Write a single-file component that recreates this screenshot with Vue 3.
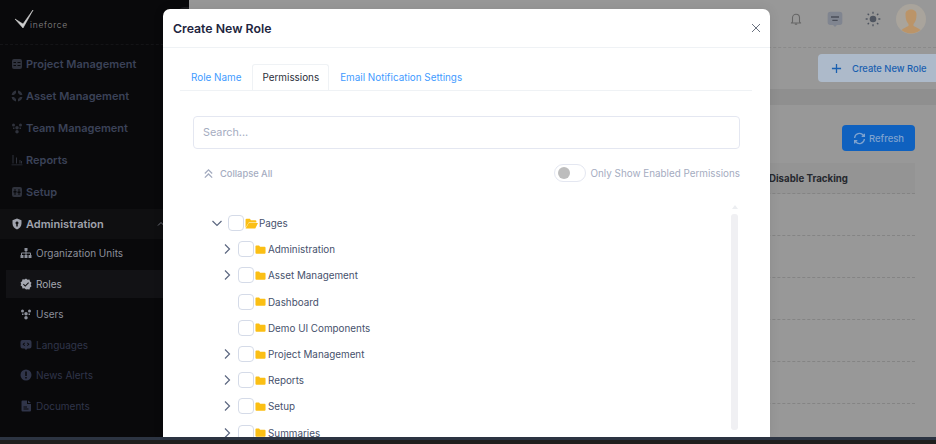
<template>
  <div class="screen">
    <div class="desktop">
      <aside class="sidebar">
        <div class="logo">
          <svg class="logo-mark" width="22" height="22" viewBox="0 0 22 22" fill="none">
            <path d="M1 10 L9 19 L19 1 L9 15 Z" fill="#cfcfcf" stroke="#cfcfcf" stroke-width="0.6" stroke-linejoin="round" />
          </svg>
          <span class="logo-text">ineforce</span>
          <span class="toggle-btn"></span>
        </div>
        <nav class="menu">
          <a v-for="item in mainMenu" :key="item.label" class="menu-item">
            <svg class="menu-icon" viewBox="0 0 24 24" fill="currentColor" fill-rule="evenodd"><path :d="icons[item.icon]" /></svg>
            {{ item.label }}
          </a>
          <a class="menu-item open">
            <svg class="menu-icon" viewBox="0 0 24 24" fill="currentColor" fill-rule="evenodd"><path :d="icons.shield" /></svg>
            Administration
            <svg class="menu-caret" width="8" height="8" viewBox="0 0 8 8" fill="none" stroke="#6a6d76" stroke-width="1"><path d="M1 5.500L4 2.500 7 5.500" /></svg>
          </a>
          <div class="submenu">
            <a v-for="item in subMenu" :key="item.label" class="sub-item" :class="{ active: item.active, dim: item.dim }">
              <svg class="sub-icon" viewBox="0 0 24 24" fill="currentColor" fill-rule="evenodd"><path :d="icons[item.icon]" /></svg>
              {{ item.label }}
            </a>
          </div>
        </nav>
      </aside>

      <main class="page">
        <header class="topbar">
          <svg class="top-icon bell" width="14" height="14" viewBox="0 0 24 24" fill="none" stroke="#666" stroke-width="1.800"><path d="M6 17V10a6 6 0 0 1 12 0v7l2 2H4zM10 21h4" stroke-linejoin="round" /></svg>
          <svg class="top-icon chat" width="16" height="16" viewBox="0 0 24 24"><path d="M5 1h14a4 4 0 0 1 4 4v12a4 4 0 0 1-4 4h-4l-3 3-3-3H5a4 4 0 0 1-4-4V5a4 4 0 0 1 4-4z" fill="#808590" /><path d="M6 8h12v2H6zM8 13h8v2H8z" fill="#4a4e58" /></svg>
          <svg class="top-icon sun" width="16" height="16" viewBox="0 0 24 24" fill="#4f5560" stroke="#4f5560" stroke-width="2"><circle cx="12" cy="12" r="5" stroke="none" /><path d="M12 1v3M12 20v3M1 12h3M20 12h3M4 4l2 2M18 18l2 2M20 4l-2 2M6 18l-2 2" /></svg>
          <span class="avatar">
            <svg width="30" height="30" viewBox="0 0 30 30">
              <circle cx="15" cy="15" r="15" fill="#a9a49c" />
              <path d="M9.500 10c0-6 11-6 11 0 0 5-1 8-3 10v2c2 1 5 2 7 4a15 15 0 0 1-19 0c2-2 5-3 7-4v-2c-2-2-3-5-3-10z" fill="#bb9468" />
            </svg>
          </span>
        </header>
        <div class="toolbar">
          <button class="create-btn">
            <svg width="11" height="11" viewBox="0 0 12 12" stroke="#1a60b0" stroke-width="1.400"><path d="M6 1v10M1 6h10" /></svg>
            Create New Role
          </button>
        </div>
        <div class="band"></div>
        <section class="card">
          <div class="card-head">
            <button class="refresh-btn">
              <svg width="13" height="13" viewBox="0 0 24 24" fill="none" stroke="#7fa3cf" stroke-width="2.400"><path d="M3 11a9 9 0 0 1 16-5l2 2M21 13a9 9 0 0 1-16 5l-2-2M21 3v5h-5M3 21v-5h5" /></svg>
              Refresh
            </button>
          </div>
          <div class="table-head">Disable Tracking</div>
          <div v-for="n in 5" :key="n" class="table-row"></div>
        </section>
      </main>

      <div class="modal">
        <div class="modal-header">
          <h2>Create New Role</h2>
          <svg width="10" height="10" viewBox="0 0 10 10" stroke="#6b7280" stroke-width="1"><path d="M1 1l8 8M9 1L1 9" /></svg>
        </div>
        <div class="modal-body">
          <div class="tabs">
            <span class="tab">Role Name</span>
            <span class="tab current">Permissions</span>
            <span class="tab">Email Notification Settings</span>
          </div>
          <div class="panel">
            <div class="search">Search...</div>
            <div class="filters">
              <span class="collapse">
                <svg width="11" height="11" viewBox="0 0 12 12" fill="none" stroke="#a3abbf" stroke-width="1.400"><path d="M2 6l4-4 4 4M2 10.500l4-4 4 4" /></svg>
                Collapse All
              </span>
              <span class="only-enabled">
                <span class="switch"><i></i></span>
                Only Show Enabled Permissions
              </span>
            </div>
            <div class="tree">
              <div class="node root">
                <svg class="chevron" width="12" height="12" viewBox="0 0 12 12" fill="none" stroke="#5c6780" stroke-width="1.200"><path d="M1.500 4l4.500 4.500L10.500 4" /></svg>
                <span class="check"></span>
                <svg class="folder" width="13" height="13" viewBox="0 0 24 24" fill="#fbbf14"><path d="M1 5a2 2 0 0 1 2-2h6l2 3h8a2 2 0 0 1 2 2v2H7l-6 10zM7 11h17l-5 10H1z" /></svg>
                <span class="label">Pages</span>
              </div>
              <div v-for="page in pages" :key="page.name" class="node child">
                <svg class="chevron" :class="{ hidden: !page.more }" width="12" height="12" viewBox="0 0 12 12" fill="none" stroke="#5c6780" stroke-width="1.200"><path d="M4 1.500L8.500 6 4 10.500" /></svg>
                <span class="check"></span>
                <svg class="folder" width="11" height="11" viewBox="0 0 24 24" fill="#fbbf14"><path d="M1 5a2 2 0 0 1 2-2h6l2 3h10a2 2 0 0 1 2 2v11a2 2 0 0 1-2 2H3a2 2 0 0 1-2-2z" /></svg>
                <span class="label">{{ page.name }}</span>
              </div>
              <div class="scrollbar">
                <span class="arrow"></span>
                <span class="thumb"></span>
              </div>
            </div>
          </div>
        </div>
      </div>
    </div>
    <div class="taskbar"></div>
  </div>
</template>

<script setup>
const icons = {
  table: 'M6 2h12a4 4 0 0 1 4 4v12a4 4 0 0 1-4 4H6a4 4 0 0 1-4-4V6a4 4 0 0 1 4-4zM5 8v2h5V8zM13 8v2h6V8zM5 14v2h5v-2zM13 14v2h6v-2z',
  asset: 'M14 1.200A11 11 0 0 1 22.800 10H17.700A6 6 0 0 0 14 6.300zM22.800 14A11 11 0 0 1 14 22.800V17.700A6 6 0 0 0 17.700 14zM10 22.800A11 11 0 0 1 1.200 14H6.300A6 6 0 0 0 10 17.700zM1.200 10A11 11 0 0 1 10 1.200V6.300A6 6 0 0 0 6.300 10z',
  team: 'M5 3a3 3 0 1 1 0 6 3 3 0 0 1 0-6zM19 3a3 3 0 1 1 0 6 3 3 0 0 1 0-6zM12 8a3.500 3.500 0 1 1 0 7 3.500 3.500 0 0 1 0-7zM12 16a3.500 3.500 0 1 1 0 7 3.500 3.500 0 0 1 0-7zM4 11h3v3H4zM17 11h3v3h-3z',
  bars: 'M3 2h2v17H3zM10 7h2v12h-2zM17 12h2v7h-2zM20 14h2v5h-2zM1 21h22v1.500H1z',
  sliders: 'M6 2h12a4 4 0 0 1 4 4v12a4 4 0 0 1-4 4H6a4 4 0 0 1-4-4V6a4 4 0 0 1 4-4zM7 6v4H5v3h2v5h2v-5h2v-3H9V6zM15 6v5h-2v3h2v4h2v-4h2v-3h-2V6z',
  shield: 'M12 1l9 3.500V11c0 6-4 10-9 12-5-2-9-6-9-12V4.500zM12 7a3 3 0 0 0-1.500 5.600V17h3v-4.400A3 3 0 0 0 12 7z',
  sitemap: 'M9 2h6v6h-2v3h7a2 2 0 0 1 2 2v3h1v6h-6v-6h3v-3h-7v3h2v6H9v-6h2v-3H4v3h3v6H1v-6h1v-3a2 2 0 0 1 2-2h7V8H9z',
  badge: 'M12 1l3 2.500 4-.5 1 4 3 2.500-1.500 3.500 1.500 3.500-3 2.500-1 4-4-.5L12 23l-3-2.500-4 .5-1-4-3-2.500L2.500 12 1 9l3-2.500 1-4 4 .5zM16.500 8.500l-6 6-3-3-1.500 1.500 4.500 4.500 7.500-7.500z',
  chat: 'M5 2h14a4 4 0 0 1 4 4v9a4 4 0 0 1-4 4h-4l-3 3-3-3H5a4 4 0 0 1-4-4V6a4 4 0 0 1 4-4zM9 7l-4 3.500L9 14l1-1.500L7.500 10.500 10 8.500zM15 7l-1 1.500 2.500 2-2.500 2 1 1.500 4-3.500z',
  alert: 'M12 1a11 11 0 1 1 0 22 11 11 0 0 1 0-22zM10.500 5v9h3V5zM10.500 16v3h3v-3z',
  file: 'M5 1h9v7h8v13a2 2 0 0 1-2 2H5a2 2 0 0 1-2-2V3a2 2 0 0 1 2-2zM16 1l6 5h-6zM7 13v2h7v-2zM7 17v2h10v-2z'
}

const mainMenu = [
  { label: 'Project Management', icon: 'table' },
  { label: 'Asset Management', icon: 'asset' },
  { label: 'Team Management', icon: 'team' },
  { label: 'Reports', icon: 'bars' },
  { label: 'Setup', icon: 'sliders' }
]

const subMenu = [
  { label: 'Organization Units', icon: 'sitemap' },
  { label: 'Roles', icon: 'badge', active: true },
  { label: 'Users', icon: 'team' },
  { label: 'Languages', icon: 'chat', dim: true },
  { label: 'News Alerts', icon: 'alert', dim: true },
  { label: 'Documents', icon: 'file', dim: true }
]

const pages = [
  { name: 'Administration', more: true },
  { name: 'Asset Management', more: true },
  { name: 'Dashboard', more: false },
  { name: 'Demo UI Components', more: false },
  { name: 'Project Management', more: true },
  { name: 'Reports', more: true },
  { name: 'Setup', more: true },
  { name: 'Summaries', more: true }
]
</script>

<style scoped>
.screen {
  width: 936px;
  height: 444px;
  display: flex;
  flex-direction: column;
  overflow: hidden;
  font-family: Inter, "Liberation Sans", sans-serif;
  background: #989898;
}
.desktop {
  position: relative;
  height: 437px;
  flex: none;
  display: flex;
  overflow: hidden;
}
.taskbar {
  height: 7px;
  flex: none;
  box-sizing: border-box;
  background: #201f1e;
  border-top: 3px solid #2c3442;
}

.sidebar {
  width: 189px;
  flex: none;
  background: #09090b;
}
.logo {
  height: 45px;
  box-sizing: border-box;
  display: flex;
  align-items: flex-start;
  padding: 9px 0 0 14px;
  border-bottom: 1px dashed #141417;
  position: relative;
}
.logo-text {
  font-size: 8.500px;
  color: #8d8d8d;
  letter-spacing: 0.700px;
  margin: 11px 0 0 -6px;
  font-weight: 300;
}
.toggle-btn {
  position: absolute;
  right: 0;
  top: 7px;
  width: 11px;
  height: 12px;
  border-radius: 6px 0 0 6px;
  background: #1b1b1e;
}
.menu {
  padding-top: 3px;
}
.menu-item {
  height: 32px;
  display: flex;
  align-items: center;
  padding-left: 11px;
  font-size: 11px;
  font-weight: 600;
  color: #3b4258;
}
.menu-item.open {
  height: 30px;
  margin-top: 1px;
  color: #a0a3ad;
  background: #0f0f11;
}
.menu-icon {
  width: 12px;
  height: 12px;
  margin-right: 3px;
  color: #2f323c;
}
.open .menu-icon {
  color: #a0a3ad;
}
.menu-caret {
  margin-left: 53px;
}
.submenu {
  margin-top: -1px;
}
.sub-item {
  height: 30.500px;
  display: flex;
  align-items: center;
  padding-left: 20px;
  font-size: 10px;
  color: #8c909b;
}
.sub-item.active {
  color: #a6a9b2;
  background: linear-gradient(#121215, #121215) 6px 1px / 100% 28px no-repeat;
}
.sub-item.dim {
  color: #30354a;
}
.sub-icon {
  width: 12px;
  height: 12px;
  margin-right: 4px;
}

.page {
  flex: 1;
  min-width: 0;
  display: flex;
  flex-direction: column;
}
.topbar {
  height: 48px;
  flex: none;
  display: flex;
  align-items: center;
  justify-content: flex-end;
  padding: 0 10px 10px 0;
  box-sizing: border-box;
  border-bottom: 1px dashed #8a8a8a;
}
.bell {
  margin-right: 24px;
}
.chat {
  margin-right: 22px;
}
.sun {
  margin-right: 15px;
}
.avatar {
  display: flex;
}
.toolbar {
  height: 41px;
  flex: none;
  display: flex;
  justify-content: flex-end;
  align-items: flex-start;
  padding-top: 6px;
  box-sizing: border-box;
}
.create-btn {
  width: 118px;
  height: 28px;
  border: 0;
  border-radius: 4px 0 0 4px;
  background: #adbaca;
  color: #1a60b0;
  font: 500 9.400px Inter, sans-serif;
  display: flex;
  align-items: center;
  gap: 10px;
  padding: 0 0 0 13px;
  white-space: nowrap;
}
.band {
  height: 16px;
  flex: none;
  background: #8f8f8f;
}
.card {
  flex: 1;
  border-radius: 6px 0 0 0;
  padding: 20px 21px 0 0;
  display: flex;
  flex-direction: column;
  align-items: stretch;
}
.card-head {
  display: flex;
  justify-content: flex-end;
  height: 38px;
}
.refresh-btn {
  width: 73px;
  height: 26px;
  border: 0;
  border-radius: 4px;
  background: #0f61bf;
  color: #7fa3cf;
  font: 500 9.500px Inter, sans-serif;
  display: flex;
  align-items: center;
  justify-content: center;
  gap: 3px;
  padding: 0;
}
.table-head {
  height: 30px;
  flex: none;
  background: #949494;
  border-bottom: 1px dashed #848484;
  font-size: 9.700px;
  font-weight: 700;
  color: #26282e;
  line-height: 31px;
  padding-left: 580px;
}
.table-row {
  height: 41px;
  flex: none;
  border-bottom: 1px dashed #848484;
}

.modal {
  position: absolute;
  left: 163px;
  top: 9px;
  width: 607px;
  bottom: 0;
  overflow: hidden;
  background: #fff;
  border-radius: 7px 7px 0 0;
  box-shadow: 0 0 12px rgba(0, 0, 0, 0.08);
}
.modal-header {
  height: 39px;
  box-sizing: border-box;
  border-bottom: 1px solid #eff2f5;
  display: flex;
  align-items: center;
  justify-content: space-between;
  padding: 0 9px 0 10px;
}
.modal-header h2 {
  margin: 0;
  font-size: 12.300px;
  font-weight: 600;
  color: #1e2540;
}
.modal-body {
  padding: 16px 18px 0 17px;
}
.tabs {
  height: 26px;
  display: flex;
  border-bottom: 1px solid #eff2f5;
  font-size: 9.900px;
  color: #3f9bff;
}
.tab {
  padding: 0 10px;
  line-height: 25px;
  height: 26px;
  box-sizing: border-box;
  border: 1px solid transparent;
  border-bottom: 0;
}
.tab.current {
  padding: 0 9px;
  color: #2b2f3a;
  background: #fff;
  border-color: #eff2f5;
  border-radius: 3px 3px 0 0;
}
.panel {
  padding: 25px 12px 0 13px;
}
.search {
  height: 33px;
  box-sizing: border-box;
  border: 1px solid #e4e7f1;
  border-radius: 4px;
  padding-left: 9px;
  line-height: 31px;
  font-size: 10.800px;
  color: #a5acbf;
}
.filters {
  margin-top: 15px;
  height: 18px;
  display: flex;
  align-items: center;
  justify-content: space-between;
  font-size: 9.300px;
  color: #a5acbf;
}
.collapse {
  display: flex;
  align-items: center;
  gap: 6px;
  padding-left: 10px;
  font-weight: 500;
}
.only-enabled {
  display: flex;
  align-items: center;
  gap: 5px;
  font-size: 9.850px;
}
.switch {
  width: 32px;
  height: 18px;
  box-sizing: border-box;
  border: 1px solid #e4e7f1;
  border-radius: 9px;
  display: flex;
  align-items: center;
  padding-left: 3px;
}
.switch i {
  width: 12px;
  height: 12px;
  border-radius: 50%;
  background: #bdbdbd;
}
.tree {
  position: relative;
  margin-top: 22px;
  padding-top: 6px;
}
.node {
  height: 26.200px;
  display: flex;
  align-items: center;
  font-size: 9.850px;
  color: #46516c;
}
.root {
  padding-left: 18px;
}
.child {
  padding-left: 28px;
}
.chevron {
  flex: none;
  margin-right: 5px;
}
.chevron.hidden {
  visibility: hidden;
}
.check {
  width: 16px;
  height: 16px;
  flex: none;
  box-sizing: border-box;
  border: 1px solid #d5dbe8;
  border-radius: 4px;
}
.folder {
  flex: none;
  margin-left: 1px;
}
.label {
  margin-left: 1px;
}
.child .label {
  margin-left: 2px;
}
.scrollbar {
  position: absolute;
  top: 0;
  right: 2px;
  width: 7px;
  display: flex;
  flex-direction: column;
  align-items: center;
}
.arrow {
  width: 0;
  height: 0;
  border: 3px solid transparent;
  border-top: 0;
  border-bottom: 4px solid #eceef1;
  margin-top: 1px;
}
.thumb {
  width: 7px;
  height: 216px;
  margin-top: 5px;
  border-radius: 3px;
  background: #f0f0f3;
}
</style>
